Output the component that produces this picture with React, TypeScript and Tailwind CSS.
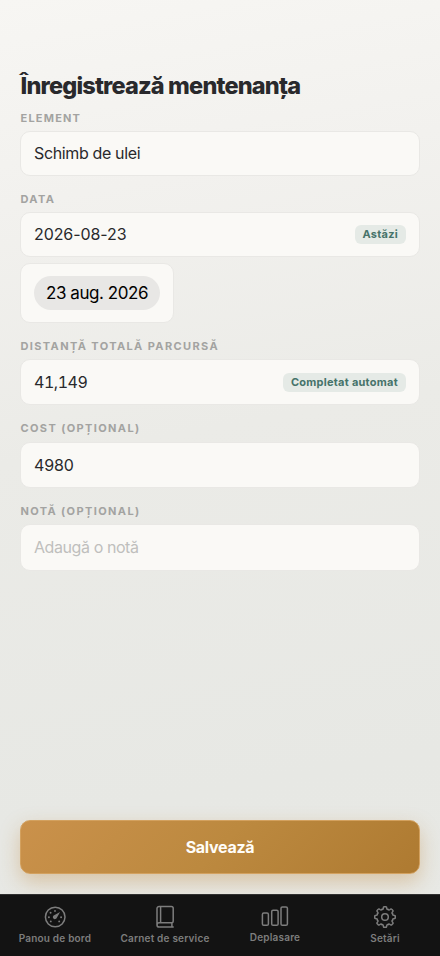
import type { ReactNode } from "react";

function Label({ children, className = "tracking-[1.38px]" }: { children: ReactNode; className?: string }) {
  return (
    <div className={`h-4 whitespace-nowrap pl-[0.5px] text-[11px] font-bold leading-4 text-[#a3a3a1] ${className}`}>
      {children}
    </div>
  );
}

function Field({ children, badge, className }: { children: ReactNode; badge?: string; className: string }) {
  return (
    <div
      className={`flex items-center justify-between rounded-[10px] border border-[#e9e8e5] bg-[#faf9f6] px-[13px] text-[16px] text-[#29292c] ${className}`}
    >
      {children}
      {badge && (
        <span className="flex h-[19px] items-center rounded-[6px] bg-[#e5eae6] px-2 text-[11px] font-bold tracking-[0.25px] text-[#46736a]">
          {badge}
        </span>
      )}
    </div>
  );
}

function GaugeIcon() {
  const dots = [
    [5.9, 12.2], [7.6, 7.8], [12, 5.9], [18.1, 12.2], [7.8, 16.4], [16.2, 16.4],
  ];
  return (
    <svg width="24" height="24" viewBox="0 0 24 24" fill="none" stroke="currentColor" strokeWidth="1.5">
      <circle cx="12.2" cy="12" r="9.8" />
      {dots.map(([x, y]) => (
        <circle key={`${x}-${y}`} cx={x} cy={y} r="0.95" fill="currentColor" stroke="none" />
      ))}
      <path d="M17.1 6.9 13.7 12.9A2 2 0 1 1 11.1 10.3Z" fill="currentColor" stroke="none" />
    </svg>
  );
}

function BookIcon() {
  return (
    <svg width="24" height="24" viewBox="0 0 24 24" fill="none" stroke="currentColor" strokeWidth="1.5" strokeLinecap="round" strokeLinejoin="round">
      <path d="M6.2 1.4H18.4a1.8 1.8 0 0 1 1.8 1.8v13a1.5 1.5 0 0 1-1.5 1.5H6.2a2.2 2.2 0 0 0 0 4.4H20.2M6.2 1.4a2.2 2.2 0 0 0-2.2 2.2V20M7.6 1.8v15.7M18.9 17.9v4" />
    </svg>
  );
}

function BarsIcon() {
  return (
    <svg width="28" height="24" viewBox="0 0 28 24" fill="none" stroke="currentColor" strokeWidth="1.5">
      <rect x="1.4" y="9" width="6" height="12.3" rx="1.4" />
      <rect x="10.7" y="6.2" width="6.4" height="15.1" rx="1.4" />
      <rect x="20" y="2.9" width="6.4" height="18.4" rx="1.4" />
    </svg>
  );
}

function gearOutline() {
  const parts: string[] = [];
  const at = (r: number, deg: number) => {
    const a = (deg * Math.PI) / 180;
    return `${(12 + r * Math.sin(a)).toFixed(2)} ${(12 - r * Math.cos(a)).toFixed(2)}`;
  };
  for (let i = 0; i < 8; i++) {
    const c = i * 45;
    parts.push(`${i === 0 ? "M" : "L"}${at(9, c - 11)}`);
    parts.push(`Q${at(10.5, c - 9)} ${at(10.3, c - 4)}`);
    parts.push(`L${at(10.3, c + 4)}`);
    parts.push(`Q${at(10.5, c + 9)} ${at(9, c + 11)}`);
    parts.push(`C${at(7.6, c + 14)} ${at(7.9, c + 18)} ${at(8.4, c + 22.5)}`);
    parts.push(`C${at(7.9, c + 27)} ${at(7.6, c + 31)} ${at(9, c + 34)}`);
  }
  return parts.join("") + "Z";
}

function GearIcon() {
  return (
    <svg width="24" height="24" viewBox="0 0 24 24" fill="none" stroke="currentColor" strokeWidth="1.5" strokeLinejoin="round">
      <path d={gearOutline()} />
      <circle cx="12" cy="12" r="3.3" />
    </svg>
  );
}

function Tab({ icon, label, className = "pt-2.5" }: { icon: ReactNode; label: string; className?: string }) {
  return (
    <div className={`flex w-[110px] flex-col items-center ${className}`}>
      {icon}
      <span className="mt-[3px] whitespace-nowrap text-[10px] font-semibold leading-3 tracking-[0.2px]">{label}</span>
    </div>
  );
}

export default function App() {
  return (
    <div className="flex h-[956px] w-[440px] flex-col overflow-hidden bg-[linear-gradient(170deg,#f7f6f3_0%,#f2f1ee_20%,#ebebe7_45%,#e7e8e4_80%,#e8e9e5_100%)] font-['Inter',sans-serif]">
      <main className="flex flex-1 flex-col px-5 pt-[70px]">
        <h1 className="h-10 whitespace-nowrap pl-[0.5px] text-[23.5px] font-extrabold leading-8 tracking-[-0.82px] text-[#29292c]">
          Înregistrează mentenanța
        </h1>
        <Label className="tracking-[1.2px]">ELEMENT</Label>
        <Field className="mt-[5px] h-[45px]"><span className="pb-px tracking-[-0.36px]">Schimb de ulei</span></Field>

        <div className="mt-[15px]"><Label>DATA</Label></div>
        <Field className="mt-[5px] h-[45px]" badge="Astăzi"><span className="pb-px tracking-[-0.08px]">2026-08-23</span></Field>
        <div className="mt-1.5 flex h-[60px] w-[154px] items-center rounded-[10px] border border-[#e9e8e5] bg-[#faf9f6] px-[13px]">
          <span className="flex h-[34px] w-[126px] items-center justify-center whitespace-nowrap rounded-full bg-[#e8e7e5] pt-0.5 text-[17px] tracking-[-0.45px] text-black">
            23 aug. 2026
          </span>
        </div>

        <div className="mt-[15px]"><Label>DISTANȚĂ TOTALĂ PARCURSĂ</Label></div>
        <Field className="mt-[5px] h-[46px]" badge="Completat automat"><span className="tabular-nums tracking-[-0.45px]">41,149</span></Field>

        <div className="mt-[15px]"><Label>COST (OPȚIONAL)</Label></div>
        <Field className="mt-[6px] h-[46px]"><span className="tracking-[-0.15px]">4980</span></Field>

        <div className="mt-[15px]"><Label>NOTĂ (OPȚIONAL)</Label></div>
        <Field className="mt-[5px] h-[47px]"><span className="pb-px tracking-[-0.42px] text-[#bfbfbd]">Adaugă o notă</span></Field>

        <button className="mb-5 mt-auto h-[54px] shrink-0 rounded-[10px] border border-[#d3a15f] bg-[linear-gradient(135deg,#ca914b_0%,#bc893f_50%,#ae7a31_100%)] text-[16px] font-bold tracking-[-0.3px] text-[#fffdf8] shadow-[0_8px_20px_rgba(190,135,60,0.38)]">
          Salvează
        </button>
      </main>
      <nav className="flex h-[62px] shrink-0 border-t border-[#303030] bg-[#131313] text-[#7d7d7d]">
        <Tab icon={<GaugeIcon />} label="Panou de bord" />
        <Tab icon={<BookIcon />} label="Carnet de service" />
        <Tab icon={<BarsIcon />} label="Deplasare" className="pt-[9px]" />
        <Tab icon={<GearIcon />} label="Setări" />
      </nav>
    </div>
  );
}
